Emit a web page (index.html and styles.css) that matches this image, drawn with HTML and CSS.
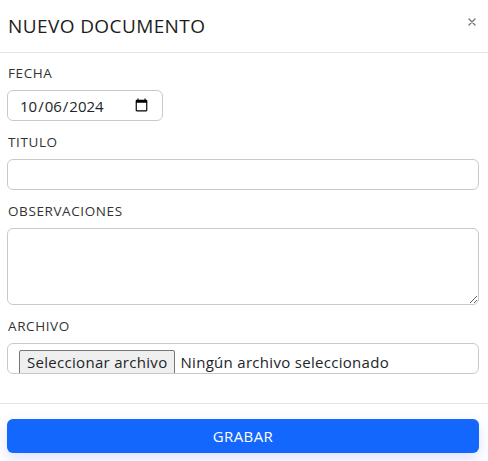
FILE: index.html
```html
<!DOCTYPE html>
<html lang="es">
<head>
  <meta charset="UTF-8" />
  <meta name="viewport" content="width=device-width, initial-scale=1.0"/>
  <title>Nuevo documento</title>
  <link rel="stylesheet" href="styles.css">
</head>
<body>
  <div class="modal">
    <div class="modal-header">
      <h5 class="modal-title">NUEVO DOCUMENTO</h5>
      <button class="btn-close" type="button" aria-label="Cerrar">
        <svg width="8" height="8" viewBox="0 0 8 8">
          <path d="M1 1L7 7M7 1L1 7" stroke="#777" stroke-width="1.4" stroke-linecap="round"/>
        </svg>
      </button>
    </div>

    <div class="modal-body">
      <div class="form-group">
        <label for="fecha">FECHA</label>
        <input type="date" id="fecha" class="form-control date-control" value="2024-10-06" />
      </div>

      <div class="form-group">
        <label for="titulo">TITULO</label>
        <input type="text" id="titulo" class="form-control" />
      </div>

      <div class="form-group">
        <label for="observaciones">OBSERVACIONES</label>
        <textarea id="observaciones" class="form-control textarea-control"></textarea>
      </div>

      <div class="form-group">
        <label for="archivo">ARCHIVO</label>
        <div class="form-control file-control">
          <span class="file-button">Seleccionar archivo</span>
          <span class="file-name">Ningún archivo seleccionado</span>
        </div>
      </div>
    </div>

    <div class="modal-footer">
      <button class="btn-primary" type="button">GRABAR</button>
    </div>
  </div>
</body>
</html>
```

FILE: styles.css
```css
body {
  font-family: "Open Sans", "Liberation Sans", sans-serif;
  background: #fff;
  color: #212529;
  margin: 0;
  padding: 0;
}

.modal {
  width: 488px;
}

.modal-header {
  height: 52px;
  display: flex;
  align-items: center;
  justify-content: space-between;
  padding: 0 8px;
  border-bottom: 1px solid #e3e3e3;
}

.modal-title {
  margin: 0;
  font-size: 19px;
  font-weight: 400;
  color: #1d1d1d;
  letter-spacing: 0.4px;
}

.btn-close {
  border: none;
  background: none;
  padding: 0;
  margin-right: 4px;
  margin-top: -10px;
  cursor: pointer;
}

.modal-body {
  padding: 12px 9px 29px 7px;
}

.form-group {
  margin-bottom: 13px;
}

.form-group:last-child {
  margin-bottom: 0;
}

.form-group label {
  display: block;
  font-size: 13.5px;
  line-height: 16px;
  color: #333;
  margin: 0 0 9px 1px;
  letter-spacing: 0.6px;
}

.form-control {
  display: block;
  box-sizing: border-box;
  width: 100%;
  height: 31px;
  padding: 0 11px;
  font-family: inherit;
  font-size: 15px;
  color: #212529;
  border: 1px solid #c9c9c9;
  border-radius: 6px;
  background: #fff;
  outline: none;
}

.date-control {
  width: 156px;
}

.textarea-control {
  height: 77px;
  resize: vertical;
}

.file-control {
  display: flex;
  align-items: flex-start;
  padding: 6px 12px 0 11px;
  overflow: hidden;
  letter-spacing: 0.3px;
}

.file-button {
  flex-shrink: 0;
  padding: 1px 7px 4px;
  background: #efefef;
  border: 1px solid #767676;
  border-radius: 2px;
  line-height: 20px;
}

.file-name {
  padding: 2px 0 0 5px;
  line-height: 20px;
}

.modal-footer {
  border-top: 1px solid #e3e3e3;
  padding: 15px 9px 9px 7px;
}

.btn-primary {
  display: block;
  width: 100%;
  height: 34px;
  border: none;
  border-radius: 6px;
  background: #1467fd;
  color: #fff;
  font-family: inherit;
  font-size: 15px;
  letter-spacing: 0.4px;
  box-shadow: 0 6px 14px rgba(70, 90, 255, 0.18);
  cursor: pointer;
}
```
